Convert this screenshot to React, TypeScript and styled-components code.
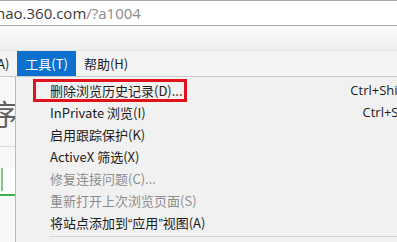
import styled, { createGlobalStyle } from 'styled-components';

const GlobalStyle = createGlobalStyle`
  html, body {
    margin: 0;
    padding: 0;
    overflow: hidden;
    background: #ffffff;
  }
  body {
    font-family: "Noto Sans CJK SC", "Liberation Sans", sans-serif;
  }
`;

const Window = styled.div`
  width: 397px;
  height: 242px;
  overflow: hidden;
  display: flex;
  flex-direction: column;
`;

const AddressBar = styled.div`
  height: 24px;
  border-top: 1px solid #a9a9a9;
  border-bottom: 1px solid #ababab;
  background: #ffffff;
  display: flex;
  align-items: center;
  margin-left: -4px;
  font-family: "Open Sans", "Liberation Sans", sans-serif;
  font-size: 15px;
  white-space: nowrap;
`;

const Host = styled.span`
  color: #3a3a3a;
`;

const Path = styled.span`
  color: #8a8a8a;
`;

const Toolbar = styled.div`
  height: 24px;
  background: linear-gradient(#fbfbfb, #efefef);
  border-bottom: 1px solid #e4e4e4;
`;

const MenuBar = styled.div`
  height: 25px;
  background: #f4f4f4;
  border-bottom: 1px solid #c9c9c9;
  display: flex;
  align-items: stretch;
  font-size: 13px;
  color: #1a1a1a;
  margin-left: -3px;
`;

const MenuTitle = styled.div<{ $active?: boolean; $first?: boolean }>`
  display: flex;
  align-items: center;
  padding: 0 8px 0 ${(p) => (p.$first ? '0' : '8px')};
  background: ${(p) => (p.$active ? '#0c70cf' : 'transparent')};
  color: ${(p) => (p.$active ? '#ffffff' : '#1a1a1a')};
`;

const Body = styled.div`
  flex: 1;
  display: flex;
  overflow: hidden;
`;

const PageStrip = styled.div`
  width: 15px;
  flex-shrink: 0;
  background: #f7f7f7;
  display: flex;
  flex-direction: column;
  overflow: hidden;
`;

const PageHeading = styled.div`
  height: 70px;
  border-bottom: 1px solid #dcdcdc;
  display: flex;
  align-items: center;
  justify-content: flex-end;
  margin-right: -3px;
  font-size: 29px;
  color: #616161;
  white-space: nowrap;
  padding-top: 2px;
  box-sizing: border-box;
`;

const PageTab = styled.div`
  margin-top: 21px;
  height: 26px;
  border-bottom: 2px solid #42b04a;
  background: #ffffff;
`;

const TabEdge = styled.div`
  margin-left: 1px;
  height: 23px;
  border-left: 2px solid #7ccc7f;
`;

const Dropdown = styled.div`
  width: 450px;
  flex-shrink: 0;
  background: #f1f1f1;
  border-left: 1px solid #b9b9b9;
  padding-top: 2px;
  display: flex;
  flex-direction: column;
  font-size: 13px;
`;

const Item = styled.div<{ $disabled?: boolean }>`
  height: 22px;
  display: flex;
  align-items: center;
  padding-left: 34px;
  padding-right: 32px;
  color: ${(p) => (p.$disabled ? '#8d8d8d' : '#1c1c1c')};
  white-space: nowrap;
`;

const Label = styled.span`
  flex: 1;
`;

const Marked = styled.span`
  box-sizing: border-box;
  width: 154px;
  height: 23px;
  margin-left: -17px;
  padding-left: 14px;
  border: 3px solid #e0121b;
  display: flex;
  align-items: center;
`;

const Quote = styled.span`
  font-family: "Liberation Sans", sans-serif;
`;

const Shortcut = styled.span`
  font-family: "Open Sans", "Liberation Sans", sans-serif;
  color: #1c1c1c;
`;

const Separator = styled.div`
  margin: 3px 0 0 33px;
  height: 1px;
  background: #d3d3d3;
`;

type MenuEntry = {
  label: React.ReactNode;
  key: string;
  shortcut?: string;
  marked?: boolean;
  disabled?: boolean;
};

const items: MenuEntry[] = [
  { key: 'd', label: '删除浏览历史记录(D)...', shortcut: 'Ctrl+Shift+Del', marked: true },
  { key: 'i', label: 'InPrivate 浏览(I)', shortcut: 'Ctrl+Shift+P' },
  { key: 'k', label: '启用跟踪保护(K)' },
  { key: 'x', label: 'ActiveX 筛选(X)' },
  { key: 'c', label: '修复连接问题(C)...', disabled: true },
  { key: 's', label: '重新打开上次浏览页面(S)', disabled: true },
  {
    key: 'a',
    label: (
      <>
        将站点添加到<Quote>“</Quote>应用<Quote>”</Quote>视图(A)
      </>
    ),
  },
];

const App = () => {
  return (
    <>
      <GlobalStyle />
      <Window>
        <AddressBar>
          <Host>hao.360.com</Host>
          <Path>/?a1004</Path>
        </AddressBar>
        <Toolbar />
        <MenuBar>
          <MenuTitle $first>A)</MenuTitle>
          <MenuTitle $active>工具(T)</MenuTitle>
          <MenuTitle>帮助(H)</MenuTitle>
        </MenuBar>
        <Body>
          <PageStrip>
            <PageHeading>序</PageHeading>
            <PageTab>
              <TabEdge />
            </PageTab>
          </PageStrip>
          <Dropdown>
            {items.map((it) => (
              <Item key={it.key} $disabled={it.disabled}>
                <Label>
                  {it.marked ? <Marked>{it.label}</Marked> : it.label}
                </Label>
                {it.shortcut && <Shortcut>{it.shortcut}</Shortcut>}
              </Item>
            ))}
            <Separator />
          </Dropdown>
        </Body>
      </Window>
    </>
  );
};

export default App;
